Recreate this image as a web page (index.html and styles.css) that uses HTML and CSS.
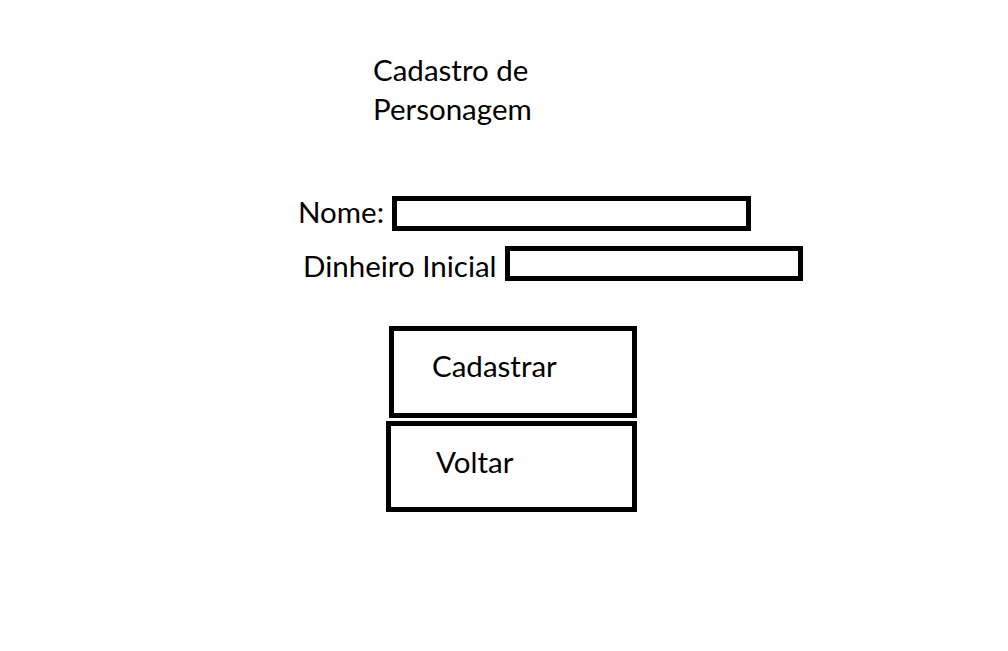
FILE: index.html
```html
<!DOCTYPE html>
<html lang="pt">
<head>
<meta charset="utf-8">
<title>Cadastro de Personagem</title>
<link rel="stylesheet" href="styles.css">
</head>
<body>
<main class="page">
  <h1 class="title">Cadastro de<br>Personagem</h1>
  <form class="form">
    <div class="row row-nome">
      <label class="label label-nome" for="nome">Nome:</label>
      <input class="field field-nome" id="nome" type="text">
    </div>
    <div class="row row-dinheiro">
      <label class="label label-dinheiro" for="dinheiro">Dinheiro Inicial</label>
      <input class="field field-dinheiro" id="dinheiro" type="text">
    </div>
    <div class="actions">
      <button class="btn btn-cadastrar" type="button">Cadastrar</button>
      <button class="btn btn-voltar" type="button">Voltar</button>
    </div>
  </form>
</main>
</body>
</html>
```

FILE: styles.css
```css
html, body {
  margin: 0;
  padding: 0;
  background: #fff;
}
body {
  width: 1008px;
  height: 651px;
  overflow: hidden;
  font-family: Lato, "Open Sans", sans-serif;
  color: #000;
}
.page {
  padding-top: 50px;
}
.title {
  margin: 0 0 0 373px;
  font-size: 29.5px;
  font-weight: 400;
  line-height: 39px;
}
.form {
  margin-top: 68px;
}
.row {
  display: flex;
  align-items: center;
}
.label {
  font-size: 29.5px;
  line-height: 35px;
  white-space: nowrap;
}
.row-nome {
  padding-left: 298px;
}
.label-nome {
  width: 94px;
  position: relative;
  top: -2px;
}
.row-dinheiro {
  padding-left: 303px;
  margin-top: 15px;
}
.label-dinheiro {
  width: 202px;
  position: relative;
  top: 2px;
}
.field {
  box-sizing: border-box;
  height: 35px;
  border: 5px solid #000;
  border-radius: 0;
  background: #fff;
  padding: 0;
  margin: 0;
  outline: none;
}
.field-nome {
  width: 359px;
}
.field-dinheiro {
  width: 298px;
}
.actions {
  margin-top: 45px;
  display: flex;
  flex-direction: column;
  align-items: flex-start;
  gap: 3px;
}
.btn {
  box-sizing: border-box;
  border: 5px solid #000;
  border-radius: 0;
  background: #fff;
  font-family: Lato, "Open Sans", sans-serif;
  font-size: 29.5px;
  color: #000;
  text-align: left;
  line-height: 34px;
  margin: 0;
  cursor: pointer;
  display: flex;
  align-items: flex-start;
}
.btn-cadastrar {
  margin-left: 389px;
  width: 248px;
  height: 92px;
  padding: 18px 0 0 38px;
}
.btn-voltar {
  margin-left: 386px;
  width: 251px;
  height: 91px;
  padding: 19px 0 0 45px;
}
```
